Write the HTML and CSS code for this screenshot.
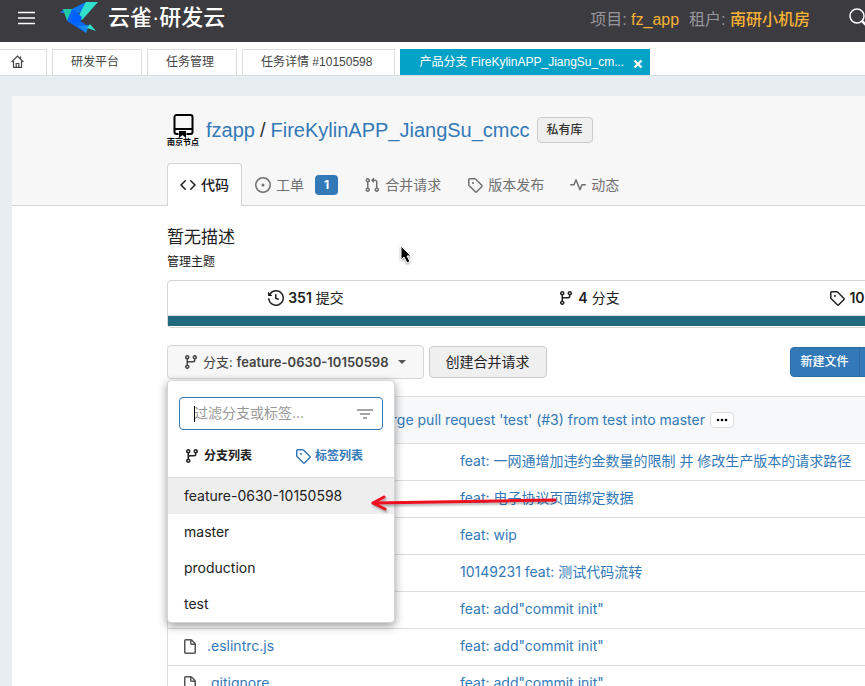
FILE: index.html
```html
<!DOCTYPE html>
<html lang="zh-CN">
<head>
<meta charset="utf-8">
<title>云雀·研发云</title>
<link rel="stylesheet" href="styles.css">
</head>
<body>
<svg class="sprite" aria-hidden="true">
  <symbol id="code" viewBox="0 0 16 16"><path d="M4.72 3.22a.75.75 0 011.06 1.06L2.06 8l3.72 3.72a.75.75 0 11-1.06 1.06L.47 8.53a.75.75 0 010-1.06l4.25-4.25zm6.56 0a.75.75 0 10-1.06 1.06L13.94 8l-3.72 3.72a.75.75 0 101.06 1.06l4.25-4.25a.75.75 0 000-1.06l-4.25-4.25z"/></symbol>
  <symbol id="issue" viewBox="0 0 16 16"><path d="M8 9.5a1.5 1.5 0 100-3 1.5 1.5 0 000 3z"/><path fill-rule="evenodd" d="M8 0a8 8 0 100 16A8 8 0 008 0zM1.5 8a6.500 6.500 0 1113 0 6.500 6.500 0 01-13 0z"/></symbol>
  <symbol id="branch" viewBox="0 0 16 16"><path fill-rule="evenodd" d="M11.75 2.5a.75.75 0 100 1.5.75.75 0 000-1.5zm-2.25.75a2.25 2.25 0 113 2.122V6A2.5 2.5 0 0110 8.5H6a1 1 0 00-1 1v1.128a2.251 2.251 0 11-1.5 0V5.372a2.25 2.25 0 111.5 0v1.836A2.492 2.492 0 016 7h4a1 1 0 001-1v-.628A2.25 2.25 0 019.5 3.25zM4.25 12a.75.75 0 100 1.5.75.75 0 000-1.5zM3.5 3.25a.75.75 0 111.5 0 .75.75 0 01-1.5 0z"/></symbol>
  <symbol id="pull" viewBox="0 0 16 16"><path fill-rule="evenodd" d="M7.177 3.073L9.573.677A.25.25 0 0110 .854v4.792a.25.25 0 01-.427.177L7.177 3.427a.25.25 0 010-.354zM3.75 2.5a.75.75 0 100 1.5.75.75 0 000-1.5zm-2.25.75a2.25 2.25 0 113 2.122v5.256a2.251 2.251 0 11-1.5 0V5.372A2.25 2.25 0 011.5 3.25zM11 2.5h-1V4h1a1 1 0 011 1v5.628a2.251 2.251 0 101.5 0V5A2.5 2.5 0 0011 2.5zm1 10.25a.75.75 0 111.5 0 .75.75 0 01-1.5 0zM3.75 12a.75.75 0 100 1.5.75.75 0 000-1.5z"/></symbol>
  <symbol id="tag" viewBox="0 0 16 16"><path fill-rule="evenodd" d="M2.5 7.775V2.75a.25.25 0 01.25-.25h5.025a.25.25 0 01.177.073l6.25 6.25a.25.25 0 010 .354l-5.025 5.025a.25.25 0 01-.354 0l-6.25-6.25a.25.25 0 01-.073-.177zm-1.5 0V2.75C1 1.784 1.784 1 2.75 1h5.025c.464 0 .91.184 1.238.513l6.25 6.25a1.75 1.75 0 010 2.474l-5.026 5.026a1.75 1.75 0 01-2.474 0l-6.25-6.25A1.75 1.75 0 011 7.775zM6 5a1 1 0 100 2 1 1 0 000-2z"/></symbol>
  <symbol id="pulse" viewBox="0 0 16 16"><path d="M6 2a.75.75 0 01.696.471L10 10.731l1.304-3.26A.75.75 0 0112 7h3.25a.75.75 0 010 1.5h-2.742l-1.812 4.528a.75.75 0 01-1.392 0L6 4.77 4.696 8.03A.75.75 0 014 8.5H.75a.75.75 0 010-1.5h2.742l1.812-4.529A.75.75 0 016 2z"/></symbol>
  <symbol id="history" viewBox="0 0 16 16"><path d="M1.643 3.143L.427 1.927A.25.25 0 000 2.104V5.75c0 .138.112.25.25.25h3.646a.25.25 0 00.177-.427L2.715 4.215a6.5 6.5 0 11-1.18 4.458.75.75 0 10-1.493.154 8.001 8.001 0 101.6-5.684zM7.75 4a.75.75 0 01.75.75v2.992l2.028.812a.75.75 0 01-.557 1.392l-2.5-1A.75.75 0 017 8.25v-3.5A.75.75 0 017.75 4z"/></symbol>
  <symbol id="file" viewBox="0 0 16 16"><path fill-rule="evenodd" d="M3.75 1.5a.25.25 0 00-.25.25v11.5c0 .138.112.25.25.25h8.5a.25.25 0 00.25-.25V6H9.75A1.75 1.75 0 018 4.25V1.5H3.75zm5.75.56v2.19c0 .138.112.25.25.25h2.19L9.5 2.06zM2 1.75C2 .784 2.784 0 3.75 0h5.086c.464 0 .909.184 1.237.513l3.414 3.414c.329.328.513.773.513 1.237v8.086A1.75 1.75 0 0112.25 15h-8.500A1.75 1.75 0 012 13.25V1.75z"/></symbol>
</svg>

<header class="topbar">
  <button class="menu-btn" aria-label="菜单"><svg width="17" height="14" viewBox="0 0 17 14"><path d="M0 1.500h17M0 7h17M0 12.500h17" stroke="#fff" stroke-width="1.400"/></svg></button>
  <a class="brand" href="#">
    <svg width="40" height="32" viewBox="0 0 40 32">
      <path d="M0 11l4-4 3 4z" fill="#1476e8"/>
      <path d="M3 7h10L7 19z" fill="#22c9a8"/>
      <path d="M12 7L26 0l-3 9-12 6z" fill="#0b76f0"/>
      <path d="M12 7L7 19l19 12 2-7-8-5 2-4z" fill="#0768f5"/>
      <path d="M26 0l12 0-16 18-4-3z" fill="#2fe0cd"/>
      <path d="M13 7l9 8-2 5-8 2z" fill="#0060ff"/>
      <path d="M18 24l11-1-3 8z" fill="#168af2"/>
      <path d="M27 26l3-4 6 7z" fill="#2fe0cd"/>
    </svg>
    <span>云雀·研发云</span>
  </a>
  <div class="context">
    <span>项目: <b>fz_app</b></span>
    <span>租户: <b>南研小机房</b></span>
  </div>
  <button class="search-btn" aria-label="搜索"><svg width="20" height="20" viewBox="0 0 20 20" fill="none" stroke="#fff"><circle cx="8" cy="8" r="7" stroke-width="1.500"/><path d="M13 13l6 6" stroke-width="2.500"/></svg></button>
</header>

<nav class="worktabs">
  <a class="home" href="#" aria-label="首页"><svg width="13" height="13" viewBox="0 0 13 13" fill="none" stroke="#444" stroke-width="1.200"><path d="M.6 7L6.500 1l5.900 6M9.500 1.500v2M2.500 6v6.300h8V6M5.200 12V8.500h2.600V12"/></svg></a>
  <a href="#">研发平台</a>
  <a href="#">任务管理</a>
  <a href="#">任务详情 #10150598</a>
  <span class="current"><a href="#">产品分支 FireKylinAPP_JiangSu_cm...</a><button aria-label="关闭"><svg width="10" height="10" viewBox="0 0 10 10"><path d="M1.500 1.500l7 7M8.500 1.500l-7 7" stroke="#fff" stroke-width="2.400"/></svg></button></span>
</nav>

<main class="frame">
  <div class="repo-head">
    <div class="repo-title">
      <span class="node">
        <svg width="21" height="24" viewBox="0 0 21 24"><path d="M3.500 1h14a2 2 0 012 2v12h-18V3a2 2 0 012-2zM1.500 15v3a2 2 0 002 2h2M19.500 15v3a2 2 0 01-2 2h-4" fill="none" stroke="#000" stroke-width="2"/><path d="M6 17h7v7l-3.500-3L6 24z"/></svg>
        <span>南京节点</span>
      </span>
      <h1><a href="#">fzapp</a><span>/</span><a href="#">FireKylinAPP_JiangSu_cmcc</a></h1>
      <span class="private">私有库</span>
    </div>
    <nav class="repo-tabs">
      <a class="active" href="#"><svg class="icon"><use href="#code"/></svg>代码</a>
      <a href="#"><svg class="icon"><use href="#issue"/></svg>工单<span class="count">1</span></a>
      <a href="#"><svg class="icon"><use href="#pull"/></svg>合并请求</a>
      <a href="#"><svg class="icon"><use href="#tag"/></svg>版本发布</a>
      <a href="#"><svg class="icon"><use href="#pulse"/></svg>动态</a>
    </nav>
  </div>

  <div class="repo-body">
    <p class="desc">暂无描述</p>
    <a class="topics" href="#">管理主题</a>

    <div class="summary">
      <div class="stats">
        <a href="#"><svg class="icon"><use href="#history"/></svg><b>351</b> 提交</a>
        <a href="#"><svg class="icon"><use href="#branch"/></svg><b>4</b> 分支</a>
        <a href="#"><svg class="icon"><use href="#tag"/></svg><b>10</b> 标签</a>
      </div>
      <div class="lang"></div>
    </div>

    <div class="actions">
      <div class="branch-picker">
        <button class="branch-btn"><svg class="icon"><use href="#branch"/></svg><span>分支: <b>feature-0630-10150598</b></span><i class="caret"></i></button>
        <div class="menu">
          <div class="filter">
            <input type="text" placeholder="过滤分支或标签..." aria-label="过滤分支或标签">
            <i class="text-caret"></i>
            <svg width="16" height="10" viewBox="0 0 16 10" stroke="#888" stroke-width="1.500"><path d="M0 1h16M3 5h10M6 9h4"/></svg>
          </div>
          <div class="kinds">
            <a class="on" href="#"><svg class="icon"><use href="#branch"/></svg>分支列表</a>
            <a href="#"><svg class="icon"><use href="#tag"/></svg>标签列表</a>
          </div>
          <ul>
            <li class="selected"><a href="#">feature-0630-10150598</a></li>
            <li><a href="#">master</a></li>
            <li><a href="#">production</a></li>
            <li><a href="#">test</a></li>
          </ul>
        </div>
      </div>
      <button class="create-btn">创建合并请求</button>
      <div class="file-btns"><button>新建文件</button><button>上传文件</button></div>
    </div>

    <table class="files">
      <colgroup><col class="name-col"><col></colgroup>
      <thead>
        <tr><th colspan="2"><div class="latest"><a href="#">Merge pull request 'test' (#3) from test into master</a><button aria-label="展开"><svg width="12" height="4" viewBox="0 0 12 4"><circle cx="2" cy="2" r="1.300"/><circle cx="6" cy="2" r="1.300"/><circle cx="10" cy="2" r="1.300"/></svg></button></div></th></tr>
      </thead>
      <tbody>
        <tr><td></td><td><a href="#">feat: 一网通增加违约金数量的限制 并 修改生产版本的请求路径</a></td></tr>
        <tr><td></td><td><a href="#">feat: 电子协议页面绑定数据</a></td></tr>
        <tr><td></td><td><a href="#">feat: wip</a></td></tr>
        <tr><td></td><td><a href="#">10149231 feat: 测试代码流转</a></td></tr>
        <tr><td></td><td><a href="#">feat: add"commit init"</a></td></tr>
        <tr><td><svg class="icon"><use href="#file"/></svg><a href="#">.eslintrc.js</a></td><td><a href="#">feat: add"commit init"</a></td></tr>
        <tr><td><svg class="icon"><use href="#file"/></svg><a href="#">.gitignore</a></td><td><a href="#">feat: add"commit init"</a></td></tr>
      </tbody>
    </table>
  </div>
</main>

<svg class="arrow" width="190" height="24" viewBox="0 0 190 24" fill="none" stroke="#ee1020" stroke-linecap="round" stroke-linejoin="round"><path d="M4 12L186 9" stroke-width="3"/><path d="M15 6L4 12l12 6" stroke-width="3"/></svg>
<svg class="pointer" width="14" height="20" viewBox="0 0 14 20"><path d="M2 1v14l3-3 3 6 3-1.500-3-5.500h4z" fill="#000" stroke="#fff"/></svg>
</body>
</html>
```
FILE: styles.css
```css
* { box-sizing: border-box; }
body {
  margin: 0;
  display: flex;
  flex-direction: column;
  position: relative;
  overflow: hidden;
  height: 100vh;
  background: #e8edf1;
  color: #212121;
  font: 14px/20px Inter, "Noto Sans CJK SC", sans-serif;
}
a { color: inherit; text-decoration: none; }
button { font: inherit; color: inherit; border: 0; background: none; padding: 0; }
svg { flex: none; }
.sprite { position: absolute; width: 0; height: 0; }
.icon { width: 16px; height: 16px; fill: currentColor; }

.topbar {
  flex: none;
  display: flex;
  align-items: center;
  height: 42px;
  padding-left: 18px;
  padding-bottom: 6px;
  background: #3c3b40;
  font-family: "Liberation Sans", "Noto Sans CJK SC", sans-serif;
}
.topbar svg { display: block; }
.brand {
  display: flex;
  align-items: center;
  gap: 8px;
  margin-left: 25px;
  color: #fff;
  font-size: 22px;
  font-weight: 500;
}
.context {
  display: flex;
  gap: 10px;
  margin-left: auto;
  padding-top: 4px;
  color: #97979b;
  font-size: 16px;
  white-space: nowrap;
}
.context b { color: #f9b233; font-weight: 500; }
.search-btn { flex: none; margin: 0 -4px 0 39px; }

.worktabs {
  flex: none;
  display: flex;
  gap: 5px;
  height: 34px;
  padding-top: 7px;
  background: #fff;
  border-bottom: 1px solid #dcdfe1;
  color: #444;
  font: 12px/24px "Liberation Sans", "Noto Sans CJK SC", sans-serif;
  white-space: nowrap;
}
.worktabs > a { padding: 0 22px 0 18px; border: 1px solid #ddd; border-bottom: 0; }
.worktabs > .home { width: 47px; padding: 5px 11px; border-left: 0; line-height: 13px; }
.current {
  display: flex;
  align-items: center;
  gap: 9px;
  padding: 0 7px 0 19px;
  background: #04a2c7;
  color: #fff;
}
.current button { line-height: 10px; padding-top: 4px; }

.frame { flex: 1; margin: 20px 0 0 12px; min-width: 993px; background: #fff; }
.repo-head { padding: 21px 12px 0 155px; background: #f7f7f7; border-bottom: 1px solid #d4d4d5; }
.repo-title { display: flex; align-items: center; height: 26px; }
.node {
  display: flex;
  flex-direction: column;
  align-items: center;
  width: 32px;
  margin-right: 7px;
  color: #000;
  font-size: 8px;
  line-height: 8px;
  font-weight: 700;
}
h1 { display: flex; gap: 5px; margin: 0; font: 400 20px/26px "Liberation Sans", sans-serif; color: #333; }
h1 a { color: #3379b8; }
.private {
  margin-left: 7px;
  padding: 2px 9px;
  border: 1px solid #ccc;
  border-radius: 4px;
  background: #efefef;
  color: #333;
  font-size: 12px;
  font-weight: 500;
}
.repo-tabs { display: flex; margin: 20px 0 -1px; color: #707070; }
.repo-tabs a { display: flex; align-items: center; gap: 5px; height: 43px; padding: 0 12px; border: 1px solid transparent; border-bottom: 0; }
.repo-tabs .active { background: #fff; border-color: #d4d4d5; border-radius: 4px 4px 0 0; color: #212121; font-weight: 500; }
.count { margin-left: 6px; padding: 0 9px; border-radius: 4px; background: #3379b8; color: #fff; font-size: 12px; font-weight: 700; }

.repo-body { padding: 20px 12px 0 155px; }
.desc { margin: 0; font-size: 17px; line-height: 22px; }
.topics { display: block; margin-top: 5px; font-size: 12px; line-height: 18px; }
.summary { margin-top: 9px; padding-bottom: 1px; border: 1px solid #d4d4d5; border-radius: 4px; }
.stats { display: grid; grid-template-columns: 276fr 290fr 258fr; height: 35px; border-bottom: 1px solid #e0e0e0; }
.stats a { display: flex; align-items: center; justify-content: center; gap: 4px; }
.stats b { font-weight: 600; }
.lang { height: 10px; background: #21697c; }

.actions { display: flex; align-items: center; margin-top: 17px; }
.branch-picker { position: relative; }
.branch-btn {
  display: flex;
  align-items: center;
  gap: 4px;
  height: 34px;
  padding: 0 17px 0 15px;
  border: 1px solid #d4d4d5;
  border-radius: 4px;
  background: #f7f7f7;
  color: #444;
  font-size: 13px;
}
.branch-btn b { font-weight: 600; }
.caret { margin-left: 5px; border: 4px solid transparent; border-top-color: #555; border-bottom: 0; }
.menu {
  position: absolute;
  z-index: 2;
  top: 35px;
  left: 0;
  width: 228px;
  border: 1px solid #d4d4d5;
  border-radius: 4px;
  background: #fff;
  box-shadow: 0 3px 10px rgba(0, 0, 0, .4);
  overflow: hidden;
}
.filter { position: relative; display: flex; align-items: center; margin: 16px 11px 0; }
.filter input {
  width: 100%;
  height: 33px;
  padding: 0 40px 2px 14px;
  border: 1px solid #3379b8;
  border-radius: 4px;
  outline: 0;
  background: #fff;
  font: inherit;
}
.filter input::placeholder { color: #999; opacity: 1; }
.filter svg { position: absolute; right: 10px; }
.text-caret { position: absolute; left: 15px; width: 1px; height: 16px; background: #000; }
.kinds { display: flex; gap: 43px; padding: 16px 16px 11px; font-size: 12px; font-weight: 600; }
.kinds a { display: flex; align-items: center; gap: 4px; color: #3379b8; }
.kinds .on { color: #212121; }
.menu ul { margin: 0; padding: 0; border-top: 1px solid #ddd; list-style: none; }
.menu li a { display: block; padding: 8px 16px; color: #222; }
.menu .selected { background: #eee; }
.create-btn { height: 32px; margin-left: 5px; padding: 0 16px; border: 1px solid #ccc; border-radius: 4px; background: #efefef; color: #222; }
.file-btns { display: flex; height: 30px; margin-left: 243px; background: #3379b8; border: 1px solid #2d6ba2; border-radius: 4px; color: #fff; font-size: 12px; font-weight: 500; }
.file-btns button { padding: 0 10px; }
.file-btns button + button { border-left: 1px solid #2d6ba2; }

.files { width: 100%; margin-top: 17px; border: 1px solid #ddd; border-spacing: 0; border-radius: 4px; color: #3379b8; table-layout: fixed; }
.name-col { width: 288px; }
.files th { height: 46px; padding: 0 0 0 203px; background: #f6f8fa; font-weight: 400; }
.files td { height: 37px; padding: 0 0 2px 14px; border-top: 1px solid #ddd; white-space: nowrap; }
.files td + td { padding-left: 4px; }
.files .icon { margin-right: 9px; color: #555; vertical-align: middle; }
.latest { display: flex; align-items: center; gap: 5px; white-space: nowrap; }
.latest button { display: flex; align-items: center; justify-content: center; width: 24px; height: 16px; border: 1px solid #ddd; border-radius: 4px; background: #fff; }

.arrow { position: absolute; z-index: 3; left: 369px; top: 491px; filter: drop-shadow(1px 2px 1px rgba(0, 0, 0, .3)); }
.pointer { position: absolute; left: 399px; top: 245px; filter: drop-shadow(0 1px 1px rgba(0, 0, 0, .4)); }
```
